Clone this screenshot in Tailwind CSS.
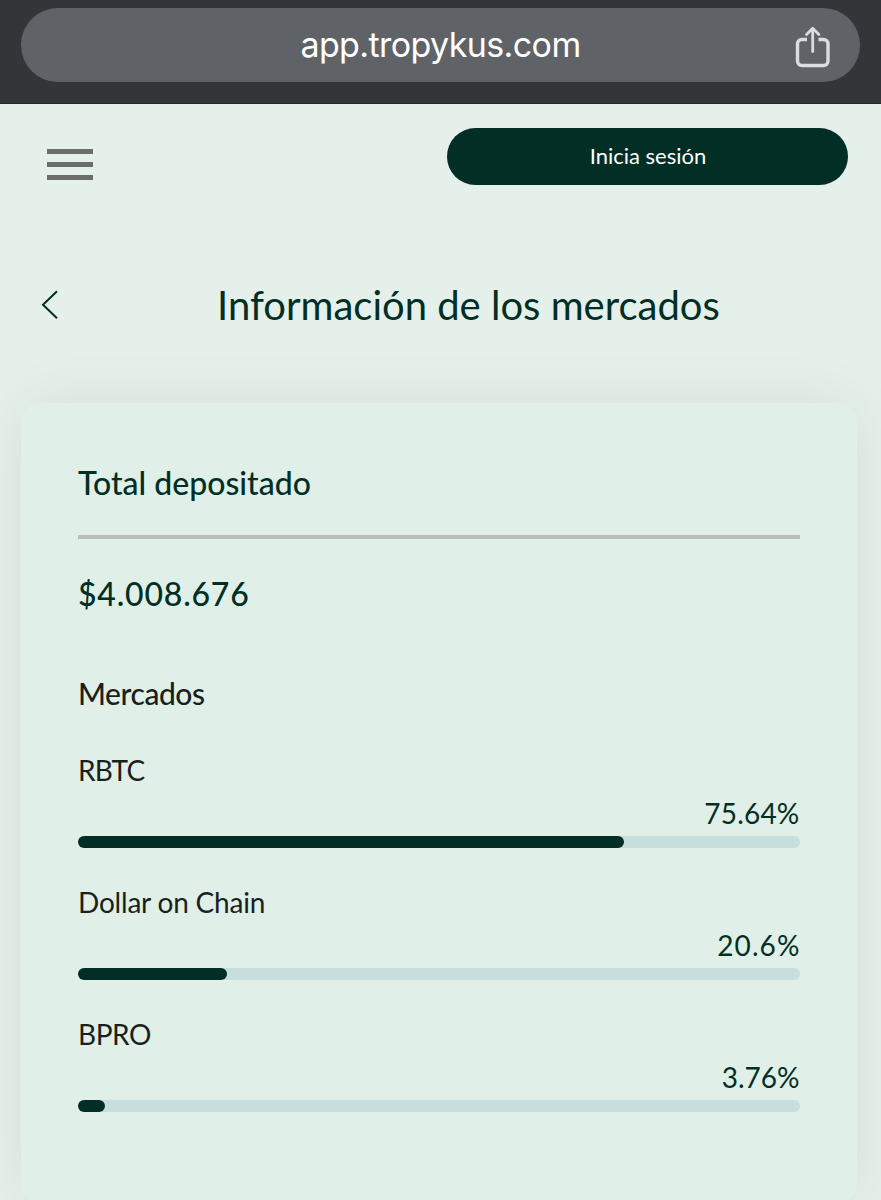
<!DOCTYPE html>
<html lang="es">
<head>
  <meta charset="UTF-8">
  <meta name="viewport" content="width=device-width, initial-scale=1.0">
  <title>Información de los mercados</title>
  <script src="https://cdn.jsdelivr.net/npm/@tailwindcss/browser@4"></script>
</head>
<body class="h-[1200px] overflow-hidden bg-[#e5f0ea] font-[Lato,sans-serif] text-[#032e25]">
  <!-- Browser bar -->
  <div class="h-[104px] border-b border-[#24282a] bg-[#323639] px-[21px] pt-2">
    <div class="grid h-[74px] grid-cols-[1fr_auto_1fr] items-center rounded-full bg-[#5f6368] pr-[29px] pl-[29px]">
      <span></span>
      <span class="pb-[1px] font-[Inter,sans-serif] text-[34px] leading-none tracking-[-0.6px] whitespace-nowrap text-white">app.tropykus.com</span>
      <svg class="mt-[3px] h-[42px] w-[36px] justify-self-end" viewBox="0 0 36 42" fill="none" stroke="#dadce0" stroke-width="3.4" stroke-linejoin="round">
        <path d="M12 13.5H7a4.5 4.5 0 0 0-4.500 4.500v17a4.500 4.500 0 0 0 4.500 4.500h21.500a4.500 4.500 0 0 0 4.500-4.500v-17a4.500 4.500 0 0 0-4.500-4.500h-5" />
        <path d="M17.700 25.500V3M11.500 8.500l6.200-6.200 6.200 6.200" stroke-width="2.800" stroke-linecap="round" />
      </svg>
    </div>
  </div>

  <!-- Header -->
  <header class="flex h-[150px] items-start justify-between pt-[23.500px] pr-[33px] pl-[47px]">
    <button class="mt-[21.500px] flex w-[46px] flex-col gap-[8px]">
      <span class="h-[5px] w-full bg-[#6b6e6b]"></span>
      <span class="h-[5px] w-full bg-[#6b6e6b]"></span>
      <span class="h-[5px] w-full bg-[#6b6e6b]"></span>
    </button>
    <button class="flex h-[57.500px] w-[401px] items-center justify-center rounded-full bg-[#032e25] pb-[2px] pl-[1px] text-[22px] text-white">Inicia sesión</button>
  </header>

  <!-- Page title -->
  <div class="flex h-[149px] items-start pt-[30px] pl-[41px]">
    <svg class="mt-[6px] h-[30px] w-[18px]" viewBox="0 0 18 30" fill="none" stroke="#032e25" stroke-width="2">
      <path d="M16 1.200 2 14.800l14 13.500" />
    </svg>
    <h1 class="ml-[158px] pt-[1px] text-[40px] leading-[40px] whitespace-nowrap">Información de los mercados</h1>
  </div>

  <!-- Markets card -->
  <main class="mr-6 ml-[20.500px] h-[800px] rounded-[20px] bg-[#e0f0e8] px-[57.500px] pt-[61px] shadow-[0_0_60px_rgba(0,0,0,0.07)]">
    <h2 class="h-[71px] pt-[1px] text-[32px] leading-[36px] font-medium">Total depositado</h2>
    <div class="h-[4px] bg-[#bcbebc]"></div>
    <p class="mt-[37px] text-[32px] leading-[36px] font-medium tracking-[0.8px]">$4.008.676</p>
    <h3 class="mt-[62px] text-[30px] leading-[38px] font-medium tracking-[-0.450px] text-[#1b1f1c]">Mercados</h3>

    <div class="mt-[36px] flex flex-col gap-[32px]">
      <div class="flex h-[100px] flex-col">
        <span class="text-[28px] leading-[44px] tracking-[-0.800px] text-[#1b1f1c]">RBTC</span>
        <span class="mb-[2px] self-end text-[28px] leading-[42px] tracking-[0.200px]">75.64%</span>
        <div class="h-[12px] rounded-full bg-[#c7dedc]">
          <div class="h-full rounded-full bg-[#032e25]" style="width: 75.64%"></div>
        </div>
      </div>
      <div class="flex h-[100px] flex-col">
        <span class="text-[28px] leading-[44px] tracking-[-0.200px] text-[#1b1f1c]">Dollar on Chain</span>
        <span class="-mr-[1px] mb-[2px] self-end text-[28px] leading-[42px] tracking-[1.100px]">20.6%</span>
        <div class="h-[12px] rounded-full bg-[#c7dedc]">
          <div class="h-full rounded-full bg-[#032e25]" style="width: 20.6%"></div>
        </div>
      </div>
      <div class="flex h-[100px] flex-col">
        <span class="text-[28px] leading-[44px] tracking-[-0.400px] text-[#1b1f1c]">BPRO</span>
        <span class="mb-[2px] self-end text-[28px] leading-[42px]">3.76%</span>
        <div class="h-[12px] rounded-full bg-[#c7dedc]">
          <div class="h-full rounded-full bg-[#032e25]" style="width: 3.76%"></div>
        </div>
      </div>
    </div>
  </main>
</body>
</html>
